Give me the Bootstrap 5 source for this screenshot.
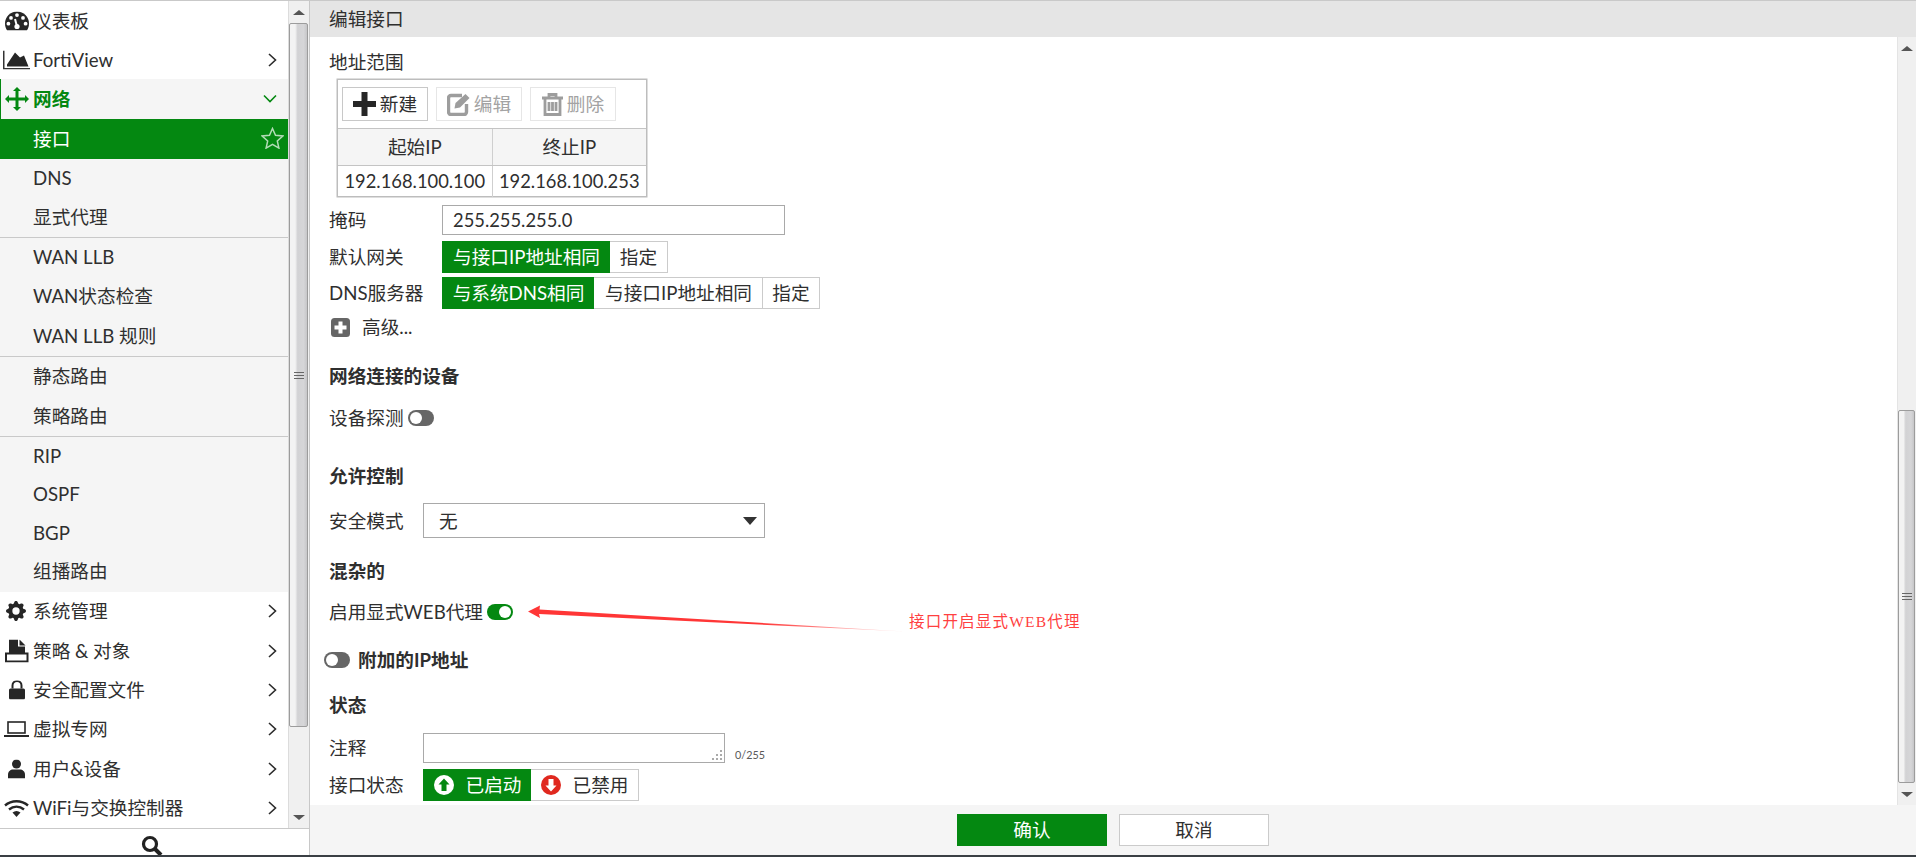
<!DOCTYPE html>
<html lang="zh-CN">
<head>
<meta charset="utf-8">
<title>编辑接口</title>
<link rel="stylesheet" href="https://cdn.jsdelivr.net/npm/bootstrap@5.3.0/dist/css/bootstrap.min.css">
<style>
:root{--fg-green:#048811;--fg-text:#2f2f2f}
html,body{height:857px;overflow:hidden}
body{font-family:Lato,"Noto Sans CJK SC",sans-serif;font-size:18.65px;line-height:24px;color:var(--fg-text);background:#fff}
.top-line{height:1px;background:#c9c9c9}
.bottom-line{height:2px;background:#3a3f44}
.app-shell{height:854px}
/* sidebar */
.side-pane{width:310px;border-right:1px solid #c8c8c8}
.side-scrollarea{height:827px}
.side-list{width:288px}
.side-item{height:39.33px;padding-left:33px;position:relative;white-space:nowrap}
.side-list .tall{height:39px}
.side-list .short{height:38.8px}
.side-list .nudge{padding-bottom:2px}
.side-group{background:#f5f5f5}
.side-sep{border-top:1px solid #c9c9c9}
.side-item>.ico{position:absolute;left:4px;top:50%;transform:translateY(-50%)}
.side-item>.chev{position:absolute;left:268px;top:50%;transform:translateY(-50%)}
.side-active-parent{color:var(--fg-green);font-weight:700;height:40px}
.side-active-parent::before{content:"";position:absolute;left:0;top:0;bottom:0;width:1px;background:var(--fg-green)}
.side-active{background:var(--fg-green);color:#fff;height:40px}
.side-active>.star{position:absolute;left:261px;top:8px}
.search-row{height:27px;border-top:1px solid #c9c9c9;padding:6px 5px 0 0;overflow:hidden}
/* scrollbars */
.sbar{background:#f0f0f0}
.sbar-left{width:21px;border-left:1px solid #dcdcdc}
.sbar-right{width:19px;border-left:1px solid #e4e4e4}
.sbar-arrow{height:22px}
.sbar-thumb{margin:0 1px 0 0;border:1px solid #9c9c9c;border-radius:2px;background:linear-gradient(90deg,#f3f3f3 0,#f3f3f3 30%,#d2d2d4 45%,#d6d6d8 80%,#c6c6c8 100%)}
.left-thumb{height:704px;margin-top:0}
.right-thumb{height:373px}
.grip{width:10px;height:7px;border-top:1px solid #666;border-bottom:1px solid #666;position:relative}
.grip::after{content:"";position:absolute;left:0;right:0;top:2px;border-top:1px solid #666}
.tri-up,.tri-down{width:0;height:0;border-left:6px solid transparent;border-right:6px solid transparent}
.tri-up{border-bottom:5px solid #555}
.tri-down{border-top:5px solid #555}
/* main */
.main-head{height:36px;background:#e5e5e5;padding-left:19px}
.main-form{height:768px;position:relative}
.form-col{padding-left:19px}
.form-line{height:24px}
.t13{margin-top:13px}.t5{margin-top:5px}.t8{margin-top:8px}.t6{margin-top:6px}.t4{margin-top:4px}.t7{margin-top:7px}
.t25{margin-top:25px}.t18{margin-top:18px}.t17{margin-top:17px}.t34{margin-top:34px}.t15{margin-top:15px}.t21{margin-top:21px}.t24{margin-top:24px}.t16{margin-top:16px}
.h30{height:30px}.h32{height:32px}.h35{height:35px}
.lab-wide{width:113px;flex:none}
.lab-narrow{width:94px;flex:none}
.range-box{width:310px;margin-left:8px;border:1px solid #bdbdbd;height:118px;box-shadow:0 0 0 .5px #bdbdbd}
.range-tools{height:49px;padding-left:4px;gap:8px;border-bottom:1px solid #c4c4c4}
.tool-btn{width:86px;height:34px;padding:0;border:1px solid #c8c8c8;border-radius:0;color:var(--fg-text);font-size:18.65px;line-height:24px;gap:4px;background:#fff}
.tool-btn.is-off{border-color:#e6e6e6;color:#a3a3a3}
.range-table.table{margin:0;table-layout:fixed;--bs-table-color:var(--fg-text);border-color:#cfcfcf}
.range-table.table>:not(caption)>*>*{padding:0;text-align:center;vertical-align:middle;box-shadow:none;color:var(--fg-text)}
.range-table thead th{height:36px;background:#f5f5f5;font-weight:400;border-bottom:1px solid #c4c4c4}
.range-table tbody td{height:32px;border-bottom:0;font-size:18.33px}
.range-table th+th,.range-table td+td{border-left:1px solid #cfcfcf}
.plain-input.form-control{width:343px;height:30px;border:1.5px solid #a9a9a9;border-radius:0;padding:0 10px;font-size:18.33px;color:var(--fg-text);line-height:24px}
.seg.btn-group .btn{height:32px;padding:0;flex:none;border-radius:0;border:1px solid #cbcbcb;font-size:18.65px;line-height:24px;color:var(--fg-text);background:#fff;margin-left:0;white-space:nowrap}
.seg.btn-group .btn+.btn{border-left:0}
.seg.btn-group .btn.dns-b{border-right:0}
.seg.btn-group .btn.dns-b+.btn{border-left:1px solid #cbcbcb}
.seg.btn-group .btn.on{background:var(--fg-green);border-color:var(--fg-green);color:#fff}
.gw-a{width:169px}.gw-b{width:58px}.dns-a{width:153px}.dns-b{width:169px}
.st-a{width:109px}.st-b{width:108px}
.seg .st-a,.seg .st-b{gap:12px;display:inline-flex;align-items:center;justify-content:center}
.adv-gap{margin-left:2px;gap:12px}
.fw-strong{font-weight:700}
.tog{display:inline-block;width:26px;height:16px;border-radius:8px;background:#666;position:relative;margin-left:4px;flex:none}
.tog::after{content:"";position:absolute;left:2px;top:2px;width:12px;height:12px;border-radius:50%;background:#fff}
.tog.on{background:var(--fg-green)}
.tog.on::after{left:12px}
.out-left{margin-left:-9px}
.plain-select.form-select{width:342px;height:35px;border:1.5px solid #a9a9a9;border-radius:0;padding:0 30px 0 15px;font-size:18.65px;line-height:24px;color:var(--fg-text);background-size:14px 8px;background-position:right 7px center;background-image:url("data:image/svg+xml,%3Csvg xmlns='http://www.w3.org/2000/svg' viewBox='0 0 14 8'%3E%3Cpath d='M0 0h14L7 8z' fill='%23333'/%3E%3C/svg%3E")}
.note-wrap{position:relative;width:302px;height:30px}
.note-box.form-control{width:302px;height:30px;min-height:30px;border:1.5px solid #a9a9a9;border-radius:0;resize:none;padding:0}
.note-grip{position:absolute;right:2px;bottom:2px}
.note-count{font-size:10.8px;line-height:16px;color:#5a5a5a;margin-left:10px;align-self:flex-end;margin-bottom:0}
.main-sb-row{min-height:0}
.main-foot{height:50px;background:#f5f5f5;gap:12px}
.foot-btn{width:150px;height:32px;padding:0;border-radius:0;font-size:18.65px;line-height:24px;border:1.5px solid #cbcbcb;background:#fff;color:var(--fg-text)}
.foot-btn.ok{background:var(--fg-green);border-color:var(--fg-green);color:#fff}
/* annotation overlay */
.note-arrow{position:absolute;left:215px;top:563px}
.note-text{position:absolute;left:599px;top:573px;font-family:"Liberation Serif","Noto Sans CJK SC",serif;font-size:15.5px;letter-spacing:1.2px;color:#ff4040;white-space:nowrap}
</style>
</head>
<body class="d-flex flex-column">
<div class="top-line"></div>
<div class="app-shell d-flex">
  <aside class="side-pane d-flex flex-column flex-shrink-0">
    <div class="side-scrollarea d-flex">
      <nav class="side-list flex-shrink-0">
        <div class="side-item tall d-flex align-items-center">
          <svg class="ico" width="24" height="19" viewBox="0 0 24 19" style="left:5px"><path d="M12 0C5.4 0 0 5.4 0 12c0 2.6.8 5 2.2 7h19.6C23.2 17 24 14.6 24 12 24 5.4 18.6 0 12 0z" fill="#262626"/><g fill="#fff"><circle cx="12" cy="3.6" r="1.9"/><circle cx="6" cy="6.4" r="1.9"/><circle cx="18" cy="6.4" r="1.9"/><circle cx="3.4" cy="12.2" r="1.9"/><circle cx="20.6" cy="12.2" r="1.9"/><circle cx="12" cy="15" r="2.6"/></g><path d="M12 15 10 7.500" stroke="#fff" stroke-width="2"/></svg>
          仪表板
        </div>
        <div class="side-item tall d-flex align-items-center">
          <svg class="ico" width="27" height="19" viewBox="0 0 27 19" style="left:3px"><path d="M.75 0v18.200H27" fill="none" stroke="#333" stroke-width="1.500"/><path d="M4 16v-2l8-12 5 5 4-2 4.500 11z" fill="#262626"/></svg>
          FortiView
          <svg class="chev" width="9" height="14" viewBox="0 0 9 14"><path d="M1 1l6.500 6L1 13" fill="none" stroke="#2b2b2b" stroke-width="1.600"/></svg>
        </div>
        <div class="side-group">
          <div class="side-item side-active-parent d-flex align-items-center">
            <svg class="ico" width="24" height="24" viewBox="0 0 24 24" style="left:5px"><path d="M12 0l4 4h-2.500v6.500H20V8l4 4-4 4v-2.500h-6.500V20H16l-4 4-4-4h2.500v-6.500H4V16l-4-4 4-4v2.500h6.500V4H8z" fill="#048811"/></svg>
            网络
            <svg class="chev" width="14" height="9" viewBox="0 0 14 9" style="left:263px"><path d="M1 1l6 6 6-6" fill="none" stroke="#048811" stroke-width="1.600"/></svg>
          </div>
          <div class="side-item side-active d-flex align-items-center">
            接口
            <svg class="star" width="23" height="22" viewBox="0 0 23 22"><path d="M11.500 1.500l3 6.800 7.300.7-5.500 4.900 1.600 7.200-6.400-3.800-6.400 3.800 1.600-7.200L1.200 9l7.300-.7z" fill="none" stroke="#b3dcb6" stroke-width="1.500"/></svg>
          </div>
          <div class="side-item tall nudge d-flex align-items-center">DNS</div>
          <div class="side-item tall nudge d-flex align-items-center">显式代理</div>
          <div class="side-sep">
            <div class="side-item nudge d-flex align-items-center">WAN LLB</div>
            <div class="side-item nudge d-flex align-items-center">WAN状态检查</div>
            <div class="side-item d-flex align-items-center">WAN LLB 规则</div>
          </div>
          <div class="side-sep">
            <div class="side-item nudge d-flex align-items-center">静态路由</div>
            <div class="side-item d-flex align-items-center">策略路由</div>
          </div>
          <div class="side-sep">
            <div class="side-item short d-flex align-items-center">RIP</div>
            <div class="side-item short nudge d-flex align-items-center">OSPF</div>
            <div class="side-item short nudge d-flex align-items-center">BGP</div>
            <div class="side-item short nudge d-flex align-items-center">组播路由</div>
          </div>
        </div>
        <div class="side-item d-flex align-items-center">
          <svg class="ico" width="20" height="20" viewBox="0 0 16 16" style="left:6px"><path d="M9.405 1.05c-.413-1.4-2.397-1.4-2.81 0l-.1.34a1.464 1.464 0 0 1-2.105.872l-.31-.17c-1.283-.698-2.686.705-1.987 1.987l.169.311c.446.82.023 1.841-.872 2.105l-.34.1c-1.4.413-1.4 2.397 0 2.81l.34.1a1.464 1.464 0 0 1 .872 2.105l-.17.31c-.698 1.283.705 2.686 1.987 1.987l.311-.169a1.464 1.464 0 0 1 2.105.872l.1.34c.413 1.4 2.397 1.4 2.81 0l.1-.34a1.464 1.464 0 0 1 2.105-.872l.31.17c1.283.698 2.686-.705 1.987-1.987l-.169-.311a1.464 1.464 0 0 1 .872-2.105l.34-.1c1.4-.413 1.4-2.397 0-2.81l-.34-.1a1.464 1.464 0 0 1-.872-2.105l.17-.31c.698-1.283-.705-2.686-1.987-1.987l-.311.169a1.464 1.464 0 0 1-2.105-.872l-.1-.34zM8 10.93a2.929 2.929 0 1 1 0-5.86 2.929 2.929 0 0 1 0 5.858z" fill="#262626"/></svg>
          系统管理
          <svg class="chev" width="9" height="14" viewBox="0 0 9 14"><path d="M1 1l6.500 6L1 13" fill="none" stroke="#2b2b2b" stroke-width="1.600"/></svg>
        </div>
        <div class="side-item d-flex align-items-center">
          策略 &amp; 对象
          <svg class="ico" width="24" height="23" viewBox="0 0 24 23" style="left:5px"><path d="M4 0h9v7h7v7H4z" fill="#262626"/><path d="M14.500 0l6 6h-6z" fill="#262626"/><rect x="1" y="14" width="21.500" height="8" fill="#fff" stroke="#262626" stroke-width="2"/></svg>
          <svg class="chev" width="9" height="14" viewBox="0 0 9 14"><path d="M1 1l6.500 6L1 13" fill="none" stroke="#2b2b2b" stroke-width="1.600"/></svg>
        </div>
        <div class="side-item d-flex align-items-center">
          <svg class="ico" width="16" height="19" viewBox="0 0 16 19" style="left:9px"><path d="M3.500 8V5a4.500 4.500 0 0 1 9 0v3" fill="none" stroke="#262626" stroke-width="2"/><rect y="8" width="16" height="11" rx="1.500" fill="#262626"/></svg>
          安全配置文件
          <svg class="chev" width="9" height="14" viewBox="0 0 9 14"><path d="M1 1l6.500 6L1 13" fill="none" stroke="#2b2b2b" stroke-width="1.600"/></svg>
        </div>
        <div class="side-item d-flex align-items-center">
          <svg class="ico" width="25" height="16" viewBox="0 0 25 16"><rect x="4" y="1" width="17" height="11" fill="none" stroke="#262626" stroke-width="1.600"/><path d="M0 14h25v2H0z" fill="#262626"/></svg>
          虚拟专网
          <svg class="chev" width="9" height="14" viewBox="0 0 9 14"><path d="M1 1l6.500 6L1 13" fill="none" stroke="#2b2b2b" stroke-width="1.600"/></svg>
        </div>
        <div class="side-item d-flex align-items-center">
          <svg class="ico" width="17" height="19" viewBox="0 0 17 19" style="left:8px"><circle cx="8.500" cy="4.500" r="4.500" fill="#262626"/><path d="M0 19v-4c0-3 2.500-5 5-5h7c2.500 0 5 2 5 5v4z" fill="#262626"/></svg>
          用户&amp;设备
          <svg class="chev" width="9" height="14" viewBox="0 0 9 14"><path d="M1 1l6.500 6L1 13" fill="none" stroke="#2b2b2b" stroke-width="1.600"/></svg>
        </div>
        <div class="side-item d-flex align-items-center">
          <svg class="ico" width="25" height="18" viewBox="0 0 25 18"><g fill="none" stroke="#262626" stroke-width="2.400"><path d="M1 6.500C7.500 .8 17.500 .8 24 6.500"/><path d="M5 10.500c4.500-3.800 10.500-3.800 15 0"/></g><path d="M8.500 13.500c2.500-2 5.500-2 8 0L12.500 18z" fill="#262626"/></svg>
          WiFi与交换控制器
          <svg class="chev" width="9" height="14" viewBox="0 0 9 14"><path d="M1 1l6.500 6L1 13" fill="none" stroke="#2b2b2b" stroke-width="1.600"/></svg>
        </div>
      </nav>
      <div class="sbar sbar-left d-flex flex-column flex-grow-1">
        <div class="sbar-arrow d-flex align-items-center justify-content-center"><span class="tri-up"></span></div>
        <div class="sbar-thumb left-thumb d-flex align-items-center justify-content-center"><span class="grip"></span></div>
        <div class="flex-grow-1"></div>
        <div class="sbar-arrow d-flex align-items-center justify-content-center"><span class="tri-down"></span></div>
      </div>
    </div>
    <div class="search-row d-flex justify-content-center">
      <svg width="22" height="22" viewBox="0 0 22 22"><circle cx="9" cy="9" r="6.500" fill="none" stroke="#222" stroke-width="3.200"/><path d="M13.500 13.500 20 20" stroke="#222" stroke-width="4"/></svg>
    </div>
  </aside>

  <main class="d-flex flex-column flex-grow-1">
    <div class="main-head d-flex align-items-center">编辑接口</div>
    <div class="d-flex main-sb-row">
      <div class="main-form flex-grow-1 form-col">
        <div class="form-line t13 d-flex align-items-center">地址范围</div>
        <div class="range-box t5">
          <div class="range-tools d-flex align-items-center">
            <button type="button" class="btn tool-btn d-inline-flex align-items-center justify-content-center">
              <svg width="23" height="24" viewBox="0 0 23 24"><path d="M8.500 0h6v9H23v6h-8.500v9h-6v-9H0V9h8.500z" fill="#262626"/></svg>新建</button>
            <button type="button" class="btn tool-btn is-off d-inline-flex align-items-center justify-content-center">
              <svg width="23" height="23" viewBox="0 0 23 23"><path d="M15 2.500H4a2.500 2.500 0 0 0-2.500 2.500v14A2.500 2.500 0 0 0 4 21.500h13a2.500 2.500 0 0 0 2.500-2.500v-8" fill="none" stroke="#9d9d9d" stroke-width="3.400"/><path d="M18.500 1l4 4-9.500 9.500-5.500 1 1-5.500z" fill="#9d9d9d"/></svg>编辑</button>
            <button type="button" class="btn tool-btn is-off d-inline-flex align-items-center justify-content-center">
              <svg width="21" height="23" viewBox="0 0 21 23"><path d="M0 5h21M7 5V1.500h7V5M3 5v16.500h15V5M7 9v9M10.500 9v9M14 9v9" fill="none" stroke="#9d9d9d" stroke-width="2.800"/></svg>删除</button>
          </div>
          <table class="table range-table">
            <thead><tr><th scope="col">起始IP</th><th scope="col">终止IP</th></tr></thead>
            <tbody><tr><td>192.168.100.100</td><td>192.168.100.253</td></tr></tbody>
          </table>
        </div>
        <div class="d-flex align-items-center h30 t8">
          <span class="lab-wide">掩码</span>
          <input class="form-control plain-input" type="text" value="255.255.255.0">
        </div>
        <div class="d-flex align-items-center h32 t6">
          <span class="lab-wide">默认网关</span>
          <div class="btn-group seg"><button type="button" class="btn on gw-a">与接口IP地址相同</button><button type="button" class="btn gw-b">指定</button></div>
        </div>
        <div class="d-flex align-items-center h32 t4">
          <span class="lab-wide">DNS服务器</span>
          <div class="btn-group seg"><button type="button" class="btn on dns-a">与系统DNS相同</button><button type="button" class="btn dns-b">与接口IP地址相同</button><button type="button" class="btn gw-b">指定</button></div>
        </div>
        <div class="form-line t6 d-flex align-items-center adv-gap">
          <svg width="19" height="19" viewBox="0 0 19 19"><rect width="19" height="19" rx="3.500" fill="#666"/><path d="M7.500 3.500h4v4h4v4h-4v4h-4v-4h-4v-4h4z" fill="#fff"/></svg>
          <span>高级...</span>
        </div>
        <div class="form-line t25 fw-strong d-flex align-items-center">网络连接的设备</div>
        <div class="form-line t18 d-flex align-items-center">设备探测<span class="tog"></span></div>
        <div class="form-line t34 fw-strong d-flex align-items-center">允许控制</div>
        <div class="d-flex align-items-center h35 t15">
          <span class="lab-narrow">安全模式</span>
          <select class="form-select plain-select"><option>无</option></select>
        </div>
        <div class="form-line t21 fw-strong d-flex align-items-center">混杂的</div>
        <div class="form-line t17 d-flex align-items-center">启用显式WEB代理<span class="tog on"></span></div>
        <div class="form-line t24 fw-strong d-flex align-items-center out-left"><span class="tog"></span><span class="ms-2">附加的IP地址</span></div>
        <div class="form-line t21 fw-strong d-flex align-items-center">状态</div>
        <div class="d-flex align-items-center h30 t16">
          <span class="lab-narrow">注释</span>
          <div class="note-wrap">
            <textarea class="form-control note-box" aria-label="注释"></textarea>
            <svg class="note-grip" width="11" height="11" viewBox="0 0 11 11" fill="#aaa"><rect x="8" y="0" width="2" height="2"/><rect x="8" y="4" width="2" height="2"/><rect x="4" y="4" width="2" height="2"/><rect x="8" y="8" width="2" height="2"/><rect x="4" y="8" width="2" height="2"/><rect x="0" y="8" width="2" height="2"/></svg>
          </div>
          <span class="note-count">0/255</span>
        </div>
        <div class="d-flex align-items-center h32 t6">
          <span class="lab-narrow">接口状态</span>
          <div class="btn-group seg">
            <button type="button" class="btn on st-a"><svg width="20" height="20" viewBox="0 0 20 20"><circle cx="10" cy="10" r="10" fill="#fff"/><path d="M10 3.500 15.500 9.500H12.500V16h-5V9.500H4.500z" fill="#048811"/></svg>已启动</button>
            <button type="button" class="btn st-b"><svg width="20" height="20" viewBox="0 0 20 20"><circle cx="10" cy="10" r="10" fill="#e0281f"/><path d="M10 16.500 4.500 10.500H7.500V4h5v6.500h3z" fill="#fff"/></svg>已禁用</button>
          </div>
        </div>
        <svg class="note-arrow" width="385" height="40" viewBox="0 0 385 40">
          <defs><linearGradient id="arrowFade" gradientUnits="userSpaceOnUse" x1="15" y1="0" x2="380" y2="0"><stop offset="0" stop-color="#ff3636"/><stop offset=".6" stop-color="#ff3636"/><stop offset="1" stop-color="#ff3636" stop-opacity=".1"/></linearGradient></defs>
          <path d="M3 11.500 15 5.500l-.5 4L380 31.500 14 14l1 4z" fill="url(#arrowFade)"/>
        </svg>
        <span class="note-text">接口开启显式WEB代理</span>
      </div>
      <div class="sbar sbar-right d-flex flex-column flex-shrink-0">
        <div class="sbar-arrow d-flex align-items-center justify-content-center"><span class="tri-up"></span></div>
        <div class="flex-grow-1"></div>
        <div class="sbar-thumb right-thumb d-flex align-items-center justify-content-center"><span class="grip"></span></div>
        <div class="sbar-arrow d-flex align-items-center justify-content-center"><span class="tri-down"></span></div>
      </div>
    </div>
    <div class="main-foot d-flex align-items-center justify-content-center">
      <button type="button" class="btn foot-btn ok">确认</button>
      <button type="button" class="btn foot-btn">取消</button>
    </div>
  </main>
</div>
<div class="bottom-line"></div>
<script src="https://cdn.jsdelivr.net/npm/bootstrap@5.3.0/dist/js/bootstrap.bundle.min.js"></script>
</body>
</html>
